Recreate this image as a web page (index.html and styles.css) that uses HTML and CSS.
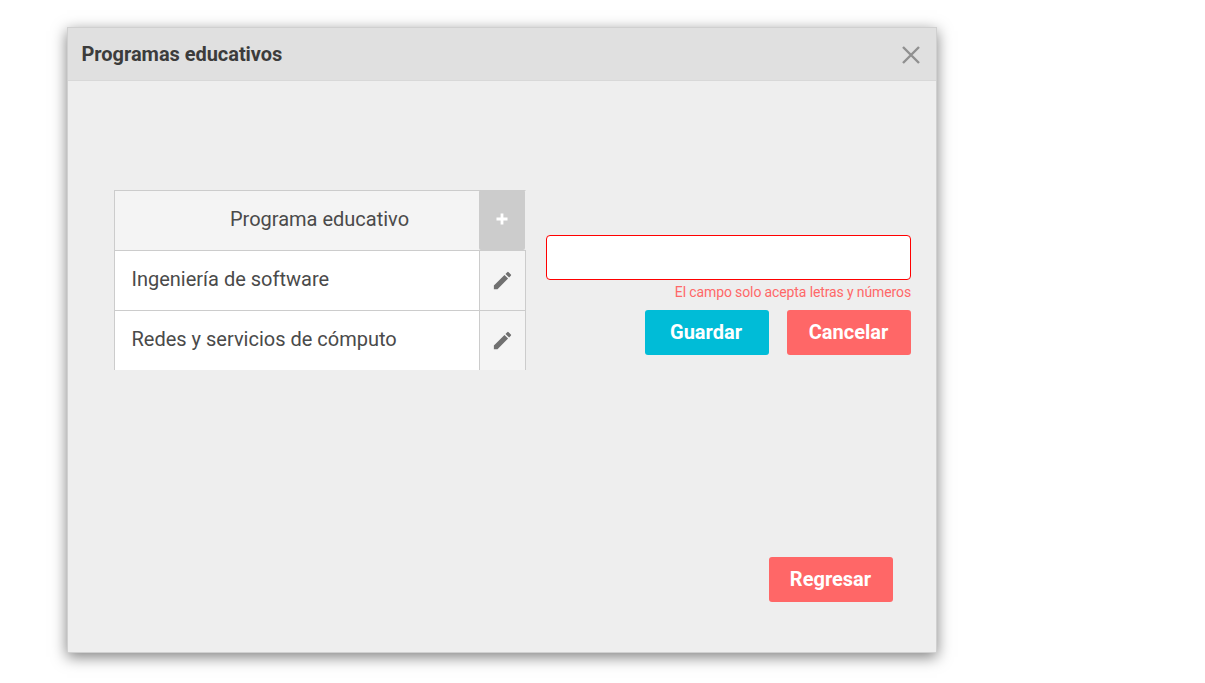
FILE: index.html
```html
<!DOCTYPE html>
<html lang="es">
<head>
<meta charset="utf-8">
<title>Programas educativos</title>
<link rel="stylesheet" href="styles.css">
</head>
<body>
<section class="dialog">
  <header class="dialog-header">
    <h1 class="dialog-title">Programas educativos</h1>
    <svg class="close" width="20" height="20" viewBox="0 0 20 20"><path d="M2 2L18 18M18 2L2 18"/></svg>
  </header>
  <div class="content">
    <div class="table">
      <div class="row row-head">
        <div class="cell cell-head">Programa educativo</div>
        <div class="add"><svg width="12" height="12" viewBox="0 0 12 12"><path d="M6 .5V11.5M.5 6H11.5"/></svg></div>
      </div>
      <div class="row">
        <div class="cell">Ingeniería de software</div>
        <div class="edit"><svg width="23" height="23" viewBox="0 0 24 24"><path d="M3 17.25V21h3.75L17.81 9.94l-3.75-3.75L3 17.25zM20.71 7.04a1 1 0 0 0 0-1.41l-2.34-2.34a1 1 0 0 0-1.41 0l-1.83 1.83 3.75 3.75 1.83-1.83z"/></svg></div>
      </div>
      <div class="row">
        <div class="cell">Redes y servicios de cómputo</div>
        <div class="edit"><svg width="23" height="23" viewBox="0 0 24 24"><path d="M3 17.25V21h3.75L17.81 9.94l-3.75-3.75L3 17.25zM20.71 7.04a1 1 0 0 0 0-1.41l-2.34-2.34a1 1 0 0 0-1.41 0l-1.83 1.83 3.75 3.75 1.83-1.83z"/></svg></div>
      </div>
    </div>
    <div class="form">
      <input class="field" type="text" aria-label="Programa educativo">
      <div class="error">El campo solo acepta letras y números</div>
      <div class="actions">
        <button class="button save">Guardar</button>
        <button class="button cancel">Cancelar</button>
      </div>
    </div>
  </div>
  <footer class="dialog-footer"><button class="button cancel">Regresar</button></footer>
</section>
</body>
</html>
```
FILE: styles.css
```css
* { box-sizing: border-box; }
body {
  margin: 0;
  height: 683px;
  padding: 27px 0 0 67px;
  overflow: hidden;
  background: #fff;
  font-family: Roboto, sans-serif;
  color: #4a4a4a;
}
.dialog {
  display: flex;
  flex-direction: column;
  width: 870px;
  height: 626px;
  border: 1px solid #d0d0d0;
  background: #eee;
  box-shadow: 0 4px 14px rgba(0, 0, 0, .5);
}
.dialog-header {
  display: flex;
  align-items: center;
  justify-content: space-between;
  height: 53px;
  padding: 0 15px 0 13.5px;
  border-bottom: 1px solid #d8d8d8;
  background: #e0e0e0;
}
.dialog-title {
  margin: 0;
  font-size: 20px;
  font-weight: 700;
  line-height: 24px;
  letter-spacing: -.04px;
  color: #3c3c3c;
}
.close { margin-top: 2px; fill: none; stroke: #909090; stroke-width: 2.4; }
.content {
  display: flex;
  gap: 20px;
  padding: 109px 25px 0 46px;
}
.table {
  width: 412px;
  border-left: 1px solid #ccc;
}
.row {
  display: flex;
  height: 60px;
  border-top: 1px solid #ccc;
  border-right: 1px solid #ccc;
}
.row-head { border-right-color: #eee; }
.cell {
  flex: 1;
  padding: 0 17px 0 16.5px;
  background: #fff;
  font-size: 20px;
  line-height: 56px;
}
.cell-head { padding: 0 0 0 45px; background: #f4f4f4; text-align: center; }
.add {
  display: flex;
  align-items: center;
  justify-content: center;
  width: 46px;
  margin-top: -1px;
  border-radius: 2px;
  background: #ccc;
}
.add svg { margin-top: -2px; fill: none; stroke: #fff; stroke-width: 2.8; }
.edit {
  display: flex;
  align-items: center;
  justify-content: center;
  width: 46px;
  padding: 0 1px 1px 0;
  border-left: 1px solid #ccc;
  background: #f4f4f4;
}
.edit svg { fill: #707070; }
.form {
  width: 365px;
  padding-top: 45px;
}
.field {
  display: block;
  width: 365px;
  height: 45px;
  border: 1px solid #f00;
  border-radius: 4px;
  background: #fff;
}
.error {
  height: 30px;
  font-size: 14px;
  line-height: 25px;
  letter-spacing: -.12px;
  text-align: right;
  white-space: nowrap;
  color: #ff6868;
}
.actions { display: flex; justify-content: flex-end; gap: 18px; }
.button {
  width: 124px;
  height: 45px;
  padding: 0 2px 1px 0;
  border: 0;
  border-radius: 3px;
  font: 700 20px/44px Roboto, sans-serif;
  color: #fff;
}
.actions .cancel { padding-right: 1px; }
.save { background: #00bcd7; }
.cancel { background: #ff6767; }
.dialog-footer {
  display: flex;
  justify-content: flex-end;
  margin-top: auto;
  padding: 0 43.5px 50px 0;
}
.dialog-footer .button { padding-right: 0; }
```
